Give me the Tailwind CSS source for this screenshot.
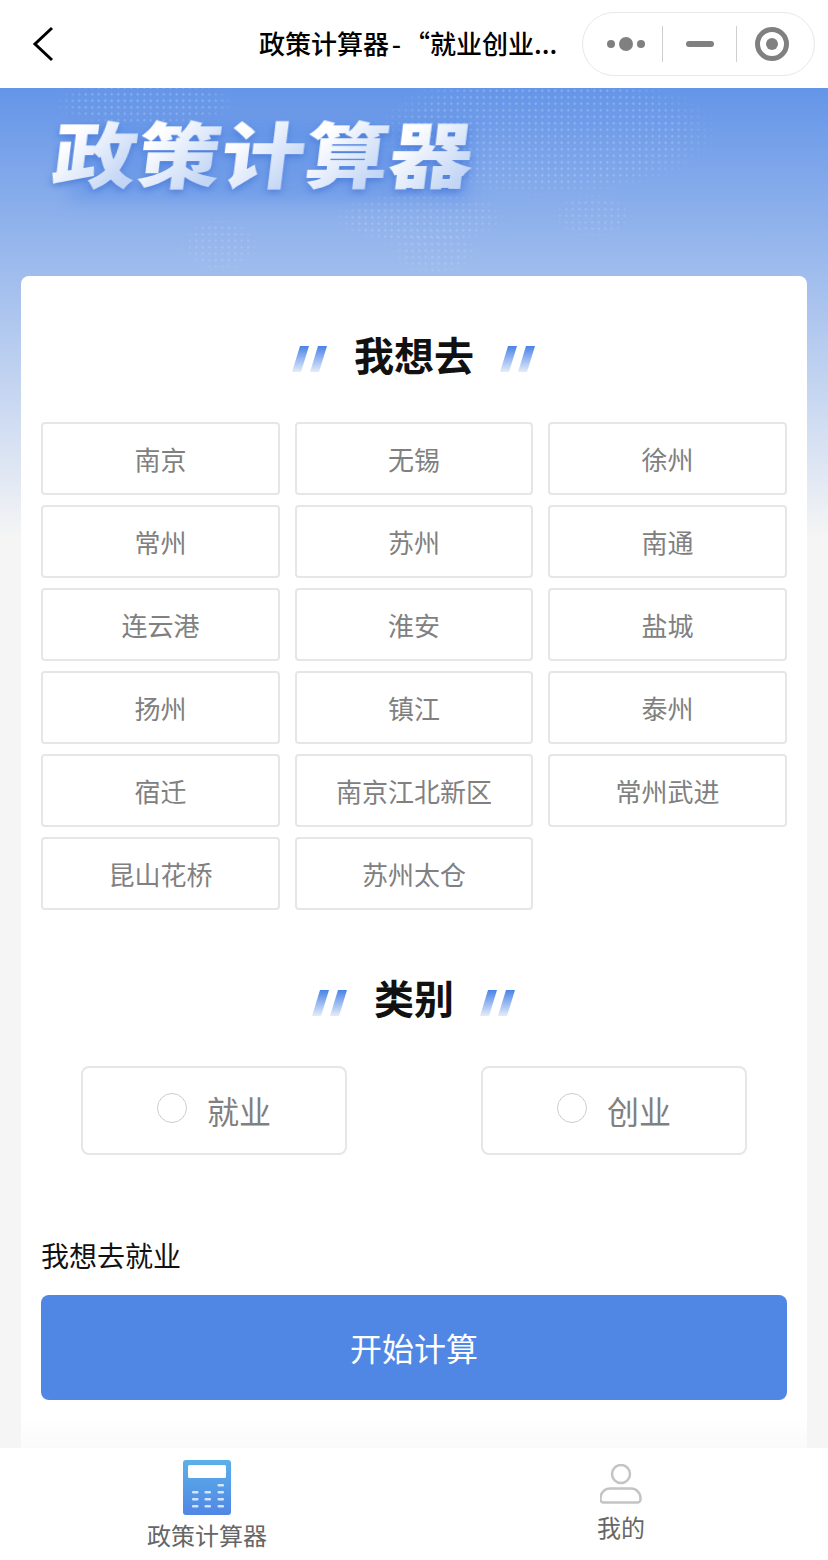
<!DOCTYPE html>
<html lang="zh-CN">
<head>
    <meta charset="UTF-8">
    <meta name="viewport" content="width=device-width, initial-scale=1.0">
    <title>政策计算器</title>
    <script src="https://cdn.jsdelivr.net/npm/@tailwindcss/browser@4"></script>
</head>
<body class="bg-white font-['Noto_Sans_CJK_SC','Noto_Sans',sans-serif]">
<div class="w-[828px] h-[1560px] flex flex-col overflow-hidden">

    <!-- top bar -->
    <header class="relative h-[88px] shrink-0 bg-white flex items-center pl-[32px] pr-[13px]">
        <svg class="w-[22px] h-[36px]" viewBox="0 0 22 36" fill="none" stroke="#000" stroke-width="3">
            <path d="M20 2 L3 18 L20 34"/>
        </svg>
        <div class="ml-[205px] -mt-[3px] w-[300px] text-[26px] font-medium text-black whitespace-nowrap [word-spacing:-3px]">政策计算器 - “就业创业...</div>
        <div class="ml-auto w-[233px] h-[64px] rounded-full border border-[#e8e8e8] flex items-center">
            <div class="w-[79px] pl-[7px] flex items-center justify-center gap-[4px]">
                <span class="w-[8px] h-[8px] rounded-full bg-[#808080]"></span>
                <span class="w-[14px] h-[14px] rounded-full bg-[#808080]"></span>
                <span class="w-[8px] h-[8px] rounded-full bg-[#808080]"></span>
            </div>
            <div class="w-px h-[36px] bg-[#cfcfcf]"></div>
            <div class="w-[73px] flex justify-center"><span class="w-[28px] h-[6px] rounded-full bg-[#808080]"></span></div>
            <div class="w-px h-[36px] bg-[#cfcfcf]"></div>
            <div class="flex-1 pr-[8px] flex justify-center">
                <span class="w-[34px] h-[34px] rounded-full border-[5px] border-[#808080] flex items-center justify-center">
                    <span class="w-[12px] h-[12px] rounded-full bg-[#808080]"></span>
                </span>
            </div>
        </div>
    </header>

    <main class="relative flex-1 bg-[linear-gradient(180deg,#6495e8_0,#f5f5f5_450px)] overflow-hidden">
        <!-- dotted world map behind the banner -->
        <div class="absolute left-[50px] -top-[10px] w-[190px] h-[50px] bg-[radial-gradient(circle,#ffffff38_1px,transparent_1.4px)] bg-[length:6.5px_6.5px] [mask-image:radial-gradient(closest-side,#000_70%,transparent)]"></div>
        <div class="absolute left-[370px] -top-[20px] w-[350px] h-[130px] bg-[radial-gradient(circle,#ffffff38_1px,transparent_1.4px)] bg-[length:6.5px_6.5px] [mask-image:radial-gradient(closest-side,#000_75%,transparent)]"></div>
        <div class="absolute left-[330px] top-[100px] w-[180px] h-[60px] bg-[radial-gradient(circle,#ffffff2e_1px,transparent_1.4px)] bg-[length:6.5px_6.5px] [mask-image:radial-gradient(closest-side,#000_70%,transparent)]"></div>
        <div class="absolute left-[180px] top-[130px] w-[80px] h-[55px] bg-[radial-gradient(circle,#ffffff26_1px,transparent_1.4px)] bg-[length:6.5px_6.5px] [mask-image:radial-gradient(closest-side,#000_70%,transparent)]"></div>
        <div class="absolute left-[390px] top-[140px] w-[90px] h-[48px] bg-[radial-gradient(circle,#ffffff26_1px,transparent_1.4px)] bg-[length:6.5px_6.5px] [mask-image:radial-gradient(closest-side,#000_70%,transparent)]"></div>
        <div class="absolute left-[550px] top-[105px] w-[85px] h-[45px] bg-[radial-gradient(circle,#ffffff26_1px,transparent_1.4px)] bg-[length:6.5px_6.5px] [mask-image:radial-gradient(closest-side,#000_70%,transparent)]"></div>

        <!-- banner title -->
        <div class="relative h-[188px] pl-[54px] pt-[13px]">
            <div class="absolute left-[70px] top-[34px] w-[400px] h-[80px] bg-[#4f86e6]/35 blur-[8px]"></div>
            <div class="relative w-[420px] h-[100px] text-[84px] leading-[100px] font-black whitespace-nowrap flex -skew-x-[6deg] scale-y-[0.85] origin-left text-transparent drop-shadow-[0_4px_4px_rgba(60,110,210,0.6)]">
                <span class="bg-clip-text bg-[linear-gradient(125deg,#ffffff_25%,#c2d5f5_85%)]">政</span>
                <span class="bg-clip-text bg-[linear-gradient(125deg,#ffffff_25%,#c2d5f5_85%)]">策</span>
                <span class="bg-clip-text bg-[linear-gradient(125deg,#ffffff_25%,#c2d5f5_85%)]">计</span>
                <span class="bg-clip-text bg-[linear-gradient(125deg,#ffffff_25%,#c2d5f5_85%)]">算</span>
                <span class="bg-clip-text bg-[linear-gradient(125deg,#ffffff_25%,#c2d5f5_85%)]">器</span>
            </div>
        </div>

        <!-- card -->
        <section class="relative mx-[21px] h-[1172px] bg-white rounded-t-[8px] px-[20px] pt-[61px]">
            <div class="h-[40px] flex items-center justify-center gap-[26px]">
                <svg class="w-[36px] h-[26px] mt-[4px]" viewBox="0 0 36 26"><defs><linearGradient id="sl" x1="0" y1="0" x2="0" y2="1"><stop offset="0" stop-color="#4a83e6"/><stop offset="1" stop-color="#e4ecfa"/></linearGradient></defs><path fill="url(#sl)" d="M8 0h9L9 26H0zM26 0h9l-8 26h-9z"/></svg>
                <h2 class="text-[40px] leading-[40px] -mt-[6px] font-bold text-[#111]">我想去</h2>
                <svg class="w-[36px] h-[26px] mt-[4px]" viewBox="0 0 36 26"><path fill="url(#sl)" d="M8 0h9L9 26H0zM26 0h9l-8 26h-9z"/></svg>
            </div>

            <div class="mt-[45px] grid grid-cols-[239px_238px_239px] gap-x-[15px] gap-y-[10px] text-[26px] text-[#808080]">
                <div class="h-[73px] border-2 border-[#e6e6e6] rounded-[4px] flex items-center justify-center">南京</div>
                <div class="h-[73px] border-2 border-[#e6e6e6] rounded-[4px] flex items-center justify-center">无锡</div>
                <div class="h-[73px] border-2 border-[#e6e6e6] rounded-[4px] flex items-center justify-center">徐州</div>
                <div class="h-[73px] border-2 border-[#e6e6e6] rounded-[4px] flex items-center justify-center">常州</div>
                <div class="h-[73px] border-2 border-[#e6e6e6] rounded-[4px] flex items-center justify-center">苏州</div>
                <div class="h-[73px] border-2 border-[#e6e6e6] rounded-[4px] flex items-center justify-center">南通</div>
                <div class="h-[73px] border-2 border-[#e6e6e6] rounded-[4px] flex items-center justify-center">连云港</div>
                <div class="h-[73px] border-2 border-[#e6e6e6] rounded-[4px] flex items-center justify-center">淮安</div>
                <div class="h-[73px] border-2 border-[#e6e6e6] rounded-[4px] flex items-center justify-center">盐城</div>
                <div class="h-[73px] border-2 border-[#e6e6e6] rounded-[4px] flex items-center justify-center">扬州</div>
                <div class="h-[73px] border-2 border-[#e6e6e6] rounded-[4px] flex items-center justify-center">镇江</div>
                <div class="h-[73px] border-2 border-[#e6e6e6] rounded-[4px] flex items-center justify-center">泰州</div>
                <div class="h-[73px] border-2 border-[#e6e6e6] rounded-[4px] flex items-center justify-center">宿迁</div>
                <div class="h-[73px] border-2 border-[#e6e6e6] rounded-[4px] flex items-center justify-center">南京江北新区</div>
                <div class="h-[73px] border-2 border-[#e6e6e6] rounded-[4px] flex items-center justify-center">常州武进</div>
                <div class="h-[73px] border-2 border-[#e6e6e6] rounded-[4px] flex items-center justify-center">昆山花桥</div>
                <div class="h-[73px] border-2 border-[#e6e6e6] rounded-[4px] flex items-center justify-center">苏州太仓</div>
            </div>

            <div class="mt-[70px] h-[40px] flex items-center justify-center gap-[26px]">
                <svg class="w-[36px] h-[26px] mt-[6px]" viewBox="0 0 36 26"><path fill="url(#sl)" d="M8 0h9L9 26H0zM26 0h9l-8 26h-9z"/></svg>
                <h2 class="text-[40px] leading-[40px] -mt-[6px] font-bold text-[#111]">类别</h2>
                <svg class="w-[36px] h-[26px] mt-[6px]" viewBox="0 0 36 26"><path fill="url(#sl)" d="M8 0h9L9 26H0zM26 0h9l-8 26h-9z"/></svg>
            </div>

            <div class="mt-[46px] px-[40px] flex justify-between text-[32px] text-[#808080]">
                <div class="w-[266px] h-[89px] border-2 border-[#e6e6e6] rounded-[8px] flex items-center justify-center gap-[20px]">
                    <span class="w-[30px] h-[30px] -mt-[5px] rounded-full border border-[#cccccc]"></span>
                    <span class="leading-[40px] -mt-[1px]">就业</span>
                </div>
                <div class="w-[266px] h-[89px] border-2 border-[#e6e6e6] rounded-[8px] flex items-center justify-center gap-[20px]">
                    <span class="w-[30px] h-[30px] -mt-[5px] rounded-full border border-[#cccccc]"></span>
                    <span class="leading-[40px] -mt-[1px]">创业</span>
                </div>
            </div>

            <p class="mt-[80px] h-[40px] text-[28px] leading-[40px] text-[#111]">我想去就业</p>
            <button class="mt-[20px] w-full h-[105px] pb-[2px] rounded-[8px] bg-[#5087e5] text-white text-[32px]">开始计算</button>
            <div class="absolute left-0 right-0 bottom-0 h-[30px] bg-[linear-gradient(180deg,#ffffff00,#fafafa)]"></div>
        </section>
    </main>

    <!-- tab bar -->
    <nav class="h-[112px] shrink-0 bg-white flex">
        <div class="w-[414px] flex flex-col items-center pt-[12px] text-[24px] leading-[32px] text-[#666]">
            <svg class="w-[48px] h-[55px]" viewBox="0 0 48 55">
                <defs><linearGradient id="calc" x1="0" y1="0" x2="0" y2="1"><stop offset="0" stop-color="#5bb0ea"/><stop offset="1" stop-color="#5087e5"/></linearGradient></defs>
                <rect width="48" height="55" rx="3" fill="url(#calc)"/>
                <rect x="5" y="5" width="38" height="13" rx="1.5" fill="#fff"/>
                <g fill="#fff" opacity=".75">
                    <rect x="34.500" y="24" width="6.500" height="2.500" rx="1"/>
                    <rect x="9" y="31" width="6.500" height="2.500" rx="1"/><rect x="21.500" y="31" width="6.500" height="2.500" rx="1"/><rect x="34.500" y="31" width="6.500" height="2.500" rx="1"/>
                    <rect x="9" y="38" width="6.500" height="2.500" rx="1"/><rect x="21.500" y="38" width="6.500" height="2.500" rx="1"/><rect x="34.500" y="38" width="6.500" height="2.500" rx="1"/>
                    <rect x="9" y="45" width="6.500" height="2.500" rx="1"/><rect x="21.500" y="45" width="6.500" height="2.500" rx="1"/><rect x="34.500" y="45" width="6.500" height="2.500" rx="1"/>
                </g>
            </svg>
            <span class="mt-[4px]">政策计算器</span>
        </div>
        <div class="w-[414px] flex flex-col items-center pt-[16px] text-[24px] leading-[32px] text-[#666]">
            <svg class="w-[42px] h-[40px]" viewBox="0 0 42 40" fill="none" stroke="#c4c4c4" stroke-width="2.500">
                <circle cx="21" cy="10" r="9"/>
                <path d="M11 24.500h20a9.500 9.500 0 0 1 9.500 9.500v1.500a3 3 0 0 1-3 3h-34a3 3 0 0 1-3-3V34a9.500 9.500 0 0 1 9.500-9.500z"/>
            </svg>
            <span class="mt-[7px]">我的</span>
        </div>
    </nav>
</div>
</body>
</html>
